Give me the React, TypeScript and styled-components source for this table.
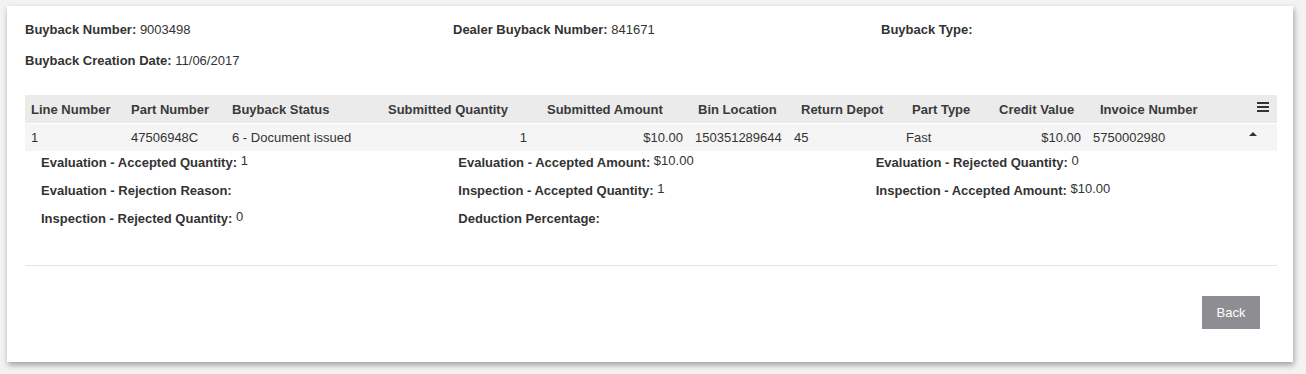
import styled, { createGlobalStyle } from 'styled-components';

const GlobalStyle = createGlobalStyle`
    html, body {
        margin: 0;
        padding: 0;
        background: #f3f3f3;
    }
    body {
        font-family: 'Liberation Sans', Arial, sans-serif;
        font-size: 13px;
        color: #333;
    }
`;

const Page = styled.div`
    padding: 6px 13px 12px 7px;
`;

const Card = styled.div`
    background: #fff;
    box-shadow: 1px 3px 6px rgba(0, 0, 0, 0.35);
    padding: 15px 16px 33px 18px;
`;

const TopGrid = styled.div`
    display: grid;
    grid-template-columns: 428px 428px 1fr;
    row-gap: 13px;
    line-height: 18px;
`;

const Field = styled.div`
    white-space: nowrap;
`;

const Label = styled.span`
    font-weight: bold;
    color: #333;
`;

const Value = styled.span<{ $raised?: boolean }>`
    color: #333;
    line-height: 13px;
    vertical-align: ${({ $raised }) => ($raised ? '2px' : 'baseline')};
`;

const Table = styled.div`
    margin-top: 25px;
`;

const HeaderRow = styled.div`
    display: grid;
    grid-template-columns: 100px 101px 156px 159px 151px 103px 111px 87px 101px 146px 1fr;
    height: 28px;
    background: #ebebeb;
`;

const HeaderCell = styled.div`
    display: flex;
    align-items: center;
    padding-left: 6px;
    font-weight: bold;
    color: #3a3a3a;
    white-space: nowrap;
`;

const DataRow = styled.div`
    display: grid;
    grid-template-columns: 100px 101px 156px 151px 156px 99px 112px 93px 94px 153px 1fr;
    height: 28px;
    background: #f5f5f5;
    border-top: 1px solid #fff;
    box-sizing: border-box;
`;

const DataCell = styled.div<{ $right?: boolean }>`
    display: flex;
    align-items: center;
    justify-content: ${({ $right }) => ($right ? 'flex-end' : 'flex-start')};
    padding: 0 6px;
    color: #333;
    white-space: nowrap;
`;

const IconCell = styled.div<{ $pad: string }>`
    display: flex;
    align-items: flex-start;
    padding: ${({ $pad }) => $pad};
    color: #333;
`;

const Details = styled.div`
    display: grid;
    grid-template-columns: repeat(3, 1fr);
    row-gap: 10px;
    padding-top: 3px;
    line-height: 18px;
`;

const DetailItem = styled.div`
    height: 18px;
    padding-left: 16px;
    white-space: nowrap;
`;

const Separator = styled.hr`
    margin: 37px 0 0 0;
    border: 0;
    border-top: 1px solid #e4e4e4;
`;

const Footer = styled.div`
    display: flex;
    justify-content: flex-end;
    padding: 30px 17px 0 0;
`;

const BackButton = styled.button`
    width: 58px;
    height: 33px;
    border: 0;
    background: #8e8e92;
    color: #fff;
    font-family: 'Liberation Sans', Arial, sans-serif;
    font-size: 13px;
    cursor: pointer;
`;

const MenuIcon = () => (
    <svg width="12" height="10" viewBox="0 0 12 10">
        <rect x="0" y="0" width="12" height="2" fill="#333" />
        <rect x="0" y="4" width="12" height="2" fill="#333" />
        <rect x="0" y="8" width="12" height="2" fill="#333" />
    </svg>
);

const CaretUp = () => (
    <svg width="8" height="4" viewBox="0 0 8 4">
        <path d="M0 4 L4 0 L8 4 Z" fill="#333" />
    </svg>
);

const headers = [
    'Line Number',
    'Part Number',
    'Buyback Status',
    'Submitted Quantity',
    'Submitted Amount',
    'Bin Location',
    'Return Depot',
    'Part Type',
    'Credit Value',
    'Invoice Number',
];

const row = [
    { v: '1' },
    { v: '47506948C' },
    { v: '6 - Document issued' },
    { v: '1', right: true },
    { v: '$10.00', right: true },
    { v: '150351289644' },
    { v: '45' },
    { v: 'Fast' },
    { v: '$10.00', right: true },
    { v: '5750002980' },
];

const details = [
    ['Evaluation - Accepted Quantity:', '1'],
    ['Evaluation - Accepted Amount:', '$10.00'],
    ['Evaluation - Rejected Quantity:', '0'],
    ['Evaluation - Rejection Reason:', ''],
    ['Inspection - Accepted Quantity:', '1'],
    ['Inspection - Accepted Amount:', '$10.00'],
    ['Inspection - Rejected Quantity:', '0'],
    ['Deduction Percentage:', ''],
];

export default function App() {
    return (
        <>
            <GlobalStyle />
            <Page>
                <Card>
                    <TopGrid>
                        <Field>
                            <Label>Buyback Number:</Label> <Value>9003498</Value>
                        </Field>
                        <Field>
                            <Label>Dealer Buyback Number:</Label> <Value>841671</Value>
                        </Field>
                        <Field>
                            <Label>Buyback Type:</Label>
                        </Field>
                        <Field>
                            <Label>Buyback Creation Date:</Label> <Value>11/06/2017</Value>
                        </Field>
                    </TopGrid>

                    <Table>
                        <HeaderRow>
                            {headers.map((h) => (
                                <HeaderCell key={h}>{h}</HeaderCell>
                            ))}
                            <IconCell $pad="7px 0 0 17px">
                                <MenuIcon />
                            </IconCell>
                        </HeaderRow>
                        <DataRow>
                            {row.map((c, i) => (
                                <DataCell key={i} $right={c.right}>
                                    {c.v}
                                </DataCell>
                            ))}
                            <IconCell $pad="8px 0 0 9px">
                                <CaretUp />
                            </IconCell>
                        </DataRow>
                        <Details>
                            {details.map(([label, value]) => (
                                <DetailItem key={label}>
                                    <Label>{label}</Label> {value && <Value $raised>{value}</Value>}
                                </DetailItem>
                            ))}
                        </Details>
                    </Table>

                    <Separator />
                    <Footer>
                        <BackButton>Back</BackButton>
                    </Footer>
                </Card>
            </Page>
        </>
    );
}
